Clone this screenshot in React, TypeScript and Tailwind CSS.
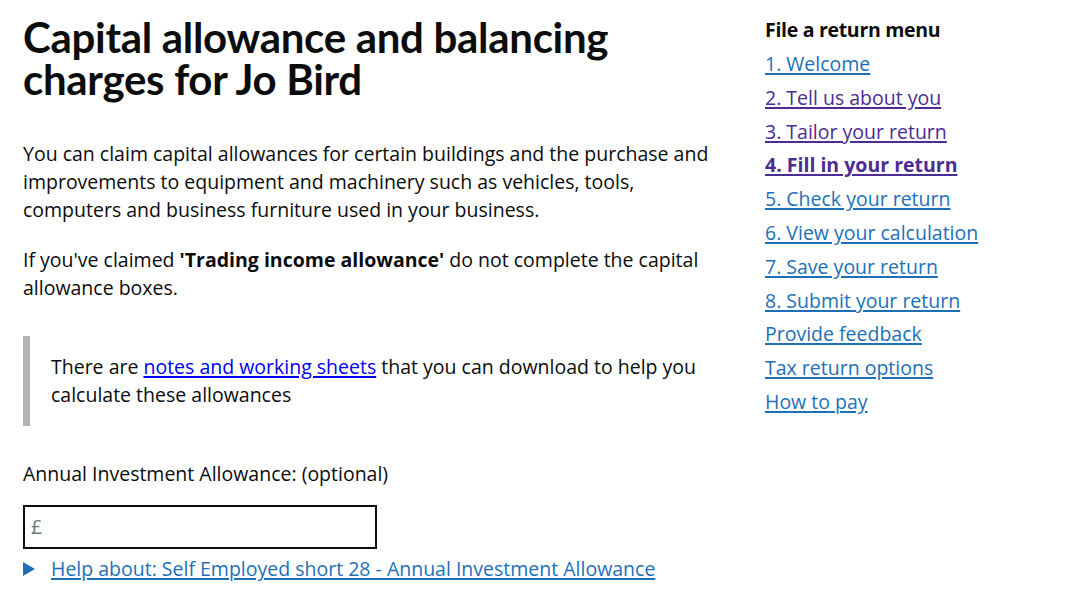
import React from "react";

const menu: { label: string; cls: string }[] = [
  { label: "1. Welcome", cls: "text-[#1d70b8] decoration-[#1d70b8]" },
  { label: "2. Tell us about you", cls: "text-[#4c2c92] decoration-[#4c2c92]" },
  { label: "3. Tailor your return", cls: "text-[#4c2c92] decoration-[#4c2c92]" },
  { label: "4. Fill in your return", cls: "text-[#4c2c92] decoration-[#4c2c92] font-bold" },
  { label: "5. Check your return", cls: "text-[#1d70b8] decoration-[#1d70b8]" },
  { label: "6. View your calculation", cls: "text-[#1d70b8] decoration-[#1d70b8]" },
  { label: "7. Save your return", cls: "text-[#1d70b8] decoration-[#1d70b8]" },
  { label: "8. Submit your return", cls: "text-[#1d70b8] decoration-[#1d70b8]" },
  { label: "Provide feedback", cls: "text-[#1d70b8] decoration-[#1d70b8]" },
  { label: "Tax return options", cls: "text-[#1d70b8] decoration-[#1d70b8]" },
  { label: "How to pay", cls: "text-[#1d70b8] decoration-[#1d70b8]" },
];

export default function App() {
  return (
    <div className="min-h-[598px] w-[1083px] bg-white text-[#0b0c0c] font-['Open_Sans','Liberation_Sans',sans-serif]">
      <div className="flex pl-[23px] pt-[16px]">
        <main className="w-[700px] shrink-0">
          <h1 className="font-['Lato','Liberation_Sans',sans-serif] text-[42px] leading-[42px] font-bold tracking-[-0.3px] mb-[40px]">
            Capital allowance and balancing
            <br />
            charges for Jo Bird
          </h1>
          <p className="text-[19.5px] leading-[28px] mb-[22px] w-[700px]">
            You can claim capital allowances for certain buildings and the purchase and improvements to equipment and machinery such as vehicles, tools, computers and business furniture used in your business.
          </p>
          <p className="text-[19.5px] leading-[28px] mb-[34px]">
            If you've claimed <strong className="font-bold">'Trading income allowance'</strong> do not complete the capital allowance boxes.
          </p>
          <div className="border-l-[7px] border-[#b1b4b6] pl-[21px] py-[17px] mb-[34px] w-[690px]">
            <p className="text-[19.5px] leading-[28px]">
              There are{" "}
              <a href="#" className="text-[#0000ee] underline decoration-2 underline-offset-2">
                notes and working sheets
              </a>{" "}
              that you can download to help you calculate these allowances
            </p>
          </div>
          <label className="block text-[19.5px] leading-[28px] mb-[17px]">
            Annual Investment Allowance: (optional)
          </label>
          <div className="w-[354px] h-[44px] border-2 border-[#0b0c0c] flex items-center pl-[6px] text-[19.5px] text-[#6f777b]">
            £
          </div>
          <div className="flex items-center mt-[6px] text-[19.5px] leading-[28px]">
            <span className="w-0 h-0 border-y-[7px] border-y-transparent border-l-[12px] border-l-[#1d70b8] mr-[16px]" />
            <a href="#" className="text-[#1d70b8] underline decoration-2 underline-offset-2">
              Help about: Self Employed short 28 - Annual Investment Allowance
            </a>
          </div>
        </main>
        <aside className="ml-[42px]">
          <h2 className="text-[19.5px] leading-[28px] font-bold mb-[6px] tracking-[-0.3px]">File a return menu</h2>
          <ul className="flex flex-col gap-[5.8px]">
            {menu.map((m) => (
              <li key={m.label} className="text-[19.5px] leading-[28px]">
                <a href="#" className={`underline decoration-2 underline-offset-2 ${m.cls}`}>
                  {m.label}
                </a>
              </li>
            ))}
          </ul>
        </aside>
      </div>
    </div>
  );
}
